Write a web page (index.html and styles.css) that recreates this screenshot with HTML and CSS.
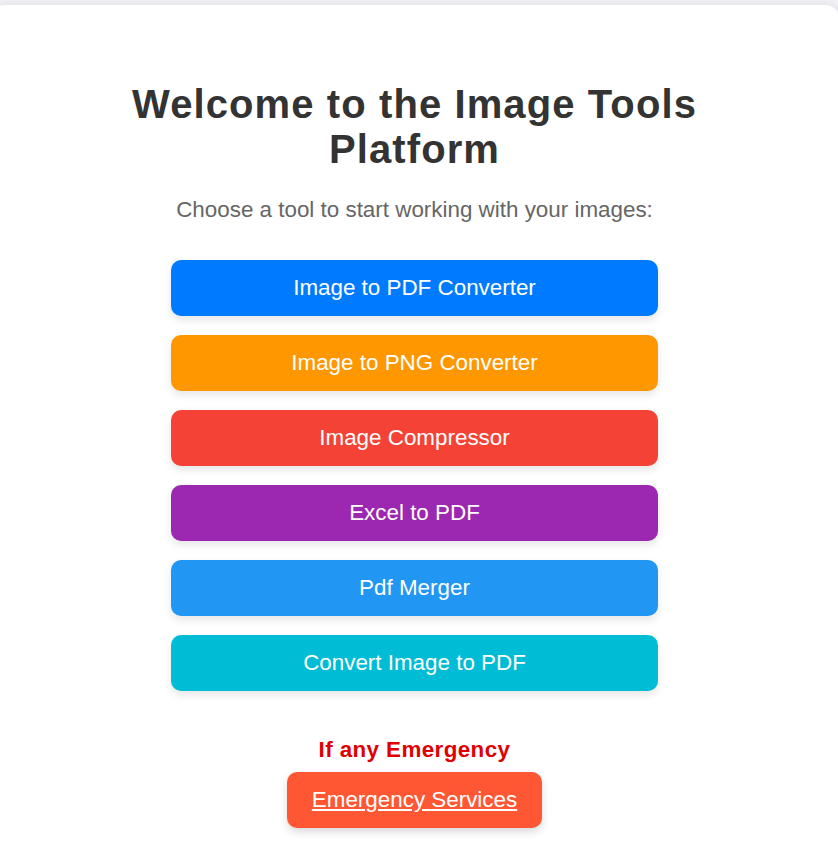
FILE: index.html
```html
<!DOCTYPE html>
<html lang="en">
<head>
<meta charset="utf-8">
<title>Image Tools Platform</title>
<link rel="stylesheet" href="styles.css">
</head>
<body>
<div class="card">
  <h1 class="title">Welcome to the Image Tools Platform</h1>
  <p class="subtitle">Choose a tool to start working with your images:</p>
  <div class="tools">
    <a class="tool tool-blue" href="#">Image to PDF Converter</a>
    <a class="tool tool-orange" href="#">Image to PNG Converter</a>
    <a class="tool tool-red" href="#">Image Compressor</a>
    <a class="tool tool-purple" href="#">Excel to PDF</a>
    <a class="tool tool-sky" href="#">Pdf Merger</a>
    <a class="tool tool-cyan" href="#">Convert Image to PDF</a>
  </div>
  <p class="emergency-label">If any Emergency</p>
  <a class="emergency-btn" href="#">Emergency Services</a>
</div>
</body>
</html>
```

FILE: styles.css
```css
html, body {
  margin: 0;
  padding: 0;
  overflow: hidden;
}
body {
  background: #f0f0f5;
  font-family: "Liberation Sans", Arial, sans-serif;
}
.card {
  box-sizing: border-box;
  width: 851px;
  margin: 5px 0 0 -11px;
  min-height: 900px;
  background: #ffffff;
  border-radius: 15px;
  box-shadow: 0 0 10px rgba(0, 0, 0, 0.08);
  padding-top: 76.6px;
  text-align: center;
}
.title {
  max-width: 600px;
  margin: 0 auto;
  font-size: 40px;
  line-height: 45px;
  font-weight: bold;
  letter-spacing: 1.1px;
  color: #333333;
}
.subtitle {
  margin: 25.5px 0 0;
  font-size: 22.4px;
  color: #666666;
}
.tools {
  width: 487px;
  margin: 37px auto 0;
  display: flex;
  flex-direction: column;
  gap: 19px;
}
.tool {
  display: block;
  padding: 15px 0;
  border-radius: 10px;
  color: #ffffff;
  font-size: 22.4px;
  text-decoration: none;
  box-shadow: 0 4px 8px rgba(0, 0, 0, 0.1);
}
.tool-blue { background: #007bff; }
.tool-orange { background: #ff9800; }
.tool-red { background: #f44336; }
.tool-purple { background: #9c27b0; }
.tool-sky { background: #2196f3; }
.tool-cyan { background: #00bcd4; }
.emergency-label {
  margin: 46px 0 0;
  font-size: 22.4px;
  font-weight: bold;
  letter-spacing: 0.4px;
  color: #e00000;
}
.emergency-btn {
  display: inline-block;
  margin-top: 8.5px;
  padding: 15px 25px;
  border-radius: 10px;
  background: #ff5733;
  color: #ffffff;
  font-size: 22.4px;
  text-decoration: underline;
  box-shadow: 0 4px 8px rgba(0, 0, 0, 0.15);
}
```
